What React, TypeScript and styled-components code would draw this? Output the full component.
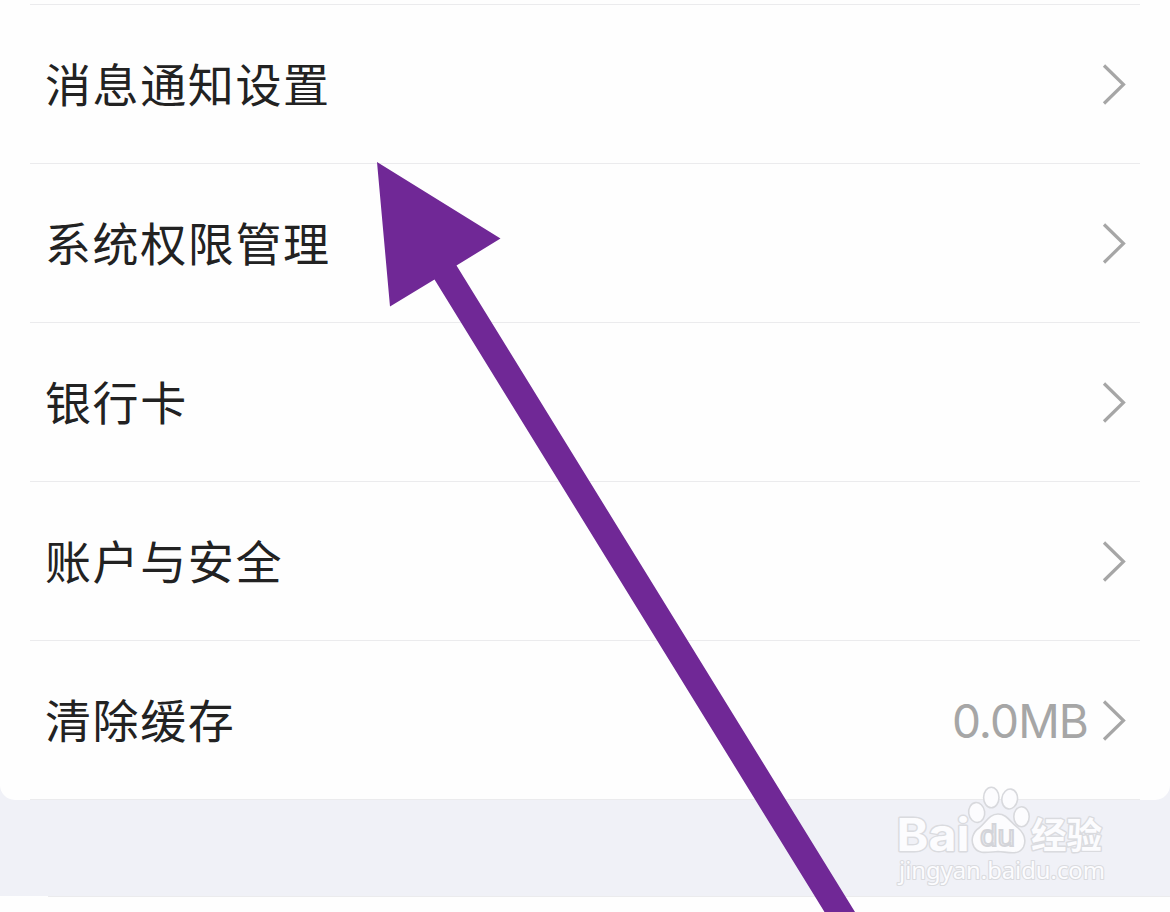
import styled, { createGlobalStyle } from 'styled-components';

const GlobalStyle = createGlobalStyle`
  * {
    box-sizing: border-box;
  }

  body {
    margin: 0;
    background-color: #f0f1f7;
    overflow: hidden;
  }
`;

const Page = styled.main`
  position: relative;
  width: 1170px;
  height: 912px;
  overflow: hidden;
  background-color: #f0f1f7;
  font-family: 'Noto Sans CJK SC', sans-serif;
`;

const Card = styled.section`
  height: 800px;
  padding: 4px 30px 0;
  background-color: #fefefe;
  border-radius: 0 0 15px 15px;
`;

const List = styled.ul`
  list-style: none;
  margin: 0;
  padding: 0;
  border-top: 1px solid #ebebed;
`;

const Row = styled.li`
  display: flex;
  align-items: center;
  height: 159px;
  padding: 2px 14px 0 15px;
  border-bottom: 1px solid #ebebed;
`;

const Label = styled.span`
  flex: 1;
  padding-bottom: 6px;
  color: #222;
  font-size: 46px;
  font-weight: 400;
  line-height: 68px;
  letter-spacing: 1.6px;
`;

const Value = styled.span`
  margin-right: 14px;
  color: #a6a6a6;
  font-family: Inter, sans-serif;
  font-size: 46px;
  line-height: 60px;
  letter-spacing: -0.9px;
`;

const NextCard = styled.section`
  height: 16px;
  margin-top: 96px;
  padding-left: 48px;
  background-color: #fefefe;
`;

const Divider = styled.div`
  height: 1px;
  background-color: #ebebed;
`;

const Arrow = styled.svg`
  position: absolute;
  top: 0;
  left: 0;
`;

const Watermark = styled.svg`
  position: absolute;
  top: 780px;
  left: 880px;
`;

const Chevron = () => (
  <svg width="24" height="42" viewBox="0 0 24 42" fill="none">
    <path d="M2 1.5L21.5 20.5L2 39.5" stroke="#a6a6a6" strokeWidth="3.2" />
  </svg>
);

const items = [
  { label: '消息通知设置' },
  { label: '系统权限管理' },
  { label: '银行卡' },
  { label: '账户与安全' },
  { label: '清除缓存', value: '0.0MB' },
];

function App() {
  return (
    <Page>
      <GlobalStyle />
      <Card>
        <List>
          {items.map((item) => (
            <Row key={item.label}>
              <Label>{item.label}</Label>
              {item.value && <Value>{item.value}</Value>}
              <Chevron />
            </Row>
          ))}
        </List>
      </Card>
      <NextCard>
        <Divider />
      </NextCard>
      <Arrow width="1170" height="912" viewBox="0 0 1170 912">
        <path d="M377 162L500.5 238.5L456.5 265.5L855 912H824.5L434.5 279.5L390 306.5Z" fill="#702896" />
      </Arrow>
      <Watermark width="240" height="120" viewBox="0 0 240 120">
        <g fill="#fcfcfe" stroke="#d8d9dd" strokeWidth="1.6">
          <ellipse cx="111.3" cy="17.5" rx="7.7" ry="10.3" />
          <ellipse cx="129.7" cy="19" rx="7.8" ry="10" transform="rotate(8 129.7 19)" />
          <ellipse cx="96.7" cy="32.5" rx="8" ry="10" transform="rotate(-8 96.7 32.5)" />
          <ellipse cx="141.5" cy="36.7" rx="7.7" ry="10" />
          <path d="M118 34C109 34 106 43 99 48C93 52 90 60 94 67C99 75 108 72 118 71.5C128 72 139 76 143.5 67C147 59 143 52 137 47C130 42 127 34 118 34Z" />
        </g>
        <g
          fill="#fcfcfe"
          stroke="#dadbdf"
          strokeWidth="2.8"
          strokeLinejoin="round"
          paintOrder="stroke"
        >
          <text x="16.5" y="71" fontFamily="Inter, sans-serif" fontWeight="700" fontSize="45" textLength="73" lengthAdjust="spacingAndGlyphs">
            Bai
          </text>
          <text x="151" y="69" fontFamily="'Noto Sans CJK SC', sans-serif" fontWeight="700" fontSize="36" textLength="71" lengthAdjust="spacingAndGlyphs">
            经验
          </text>
          <text x="19" y="99" fontFamily="'Noto Sans', sans-serif" fontSize="23.5" strokeWidth="2.2" textLength="206" lengthAdjust="spacingAndGlyphs">
            jingyan.baidu.com
          </text>
        </g>
        <text x="100" y="66" fontFamily="Liberation Sans, sans-serif" fontSize="29" fill="#eeeff2" stroke="#d3d4d9" strokeWidth="1.8" textLength="35" lengthAdjust="spacingAndGlyphs">
          du
        </text>
      </Watermark>
    </Page>
  );
}

export default App;
